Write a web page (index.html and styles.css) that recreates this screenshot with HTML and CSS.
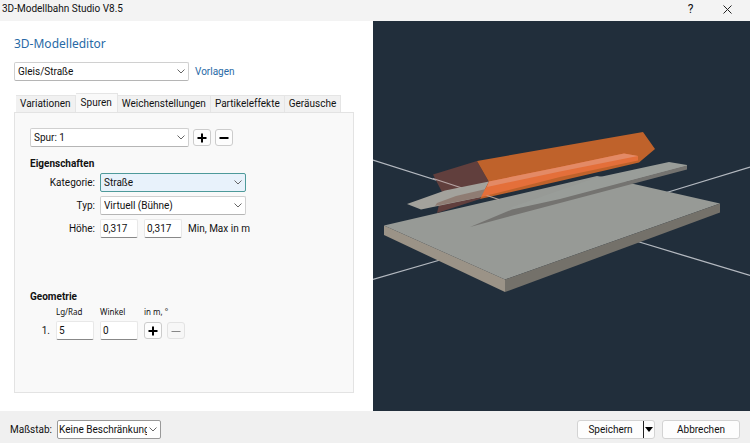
FILE: index.html
```html
<!DOCTYPE html>
<html lang="de">
<head>
    <meta charset="UTF-8">
    <meta name="viewport" content="width=device-width, initial-scale=1.0">
    <title>3D-Modellbahn Studio V8.5</title>
    <link rel="stylesheet" href="styles.css">
</head>
<body>
    <header class="titlebar">
        <span class="window-title">3D-Modellbahn Studio V8.5</span>
        <button class="window-button" type="button" aria-label="Hilfe">?</button>
        <button class="window-button" type="button" aria-label="Schließen">
            <svg width="9" height="9" viewBox="0 0 9 9"><path d="M0.5 0.5L8.5 8.5M8.5 0.5L0.5 8.5" stroke="#222" fill="none"/></svg>
        </button>
    </header>

    <main class="content">
        <section class="editor">
            <h1>3D-Modelleditor</h1>
            <div class="row template-row">
                <select class="wide" aria-label="Modelltyp"><option>Gleis/Straße</option></select>
                <a href="#">Vorlagen</a>
            </div>

            <div class="tabs" role="tablist">
                <button class="tab" type="button" role="tab">Variationen</button>
                <button class="tab active" type="button" role="tab" aria-selected="true">Spuren</button>
                <button class="tab" type="button" role="tab">Weichenstellungen</button>
                <button class="tab" type="button" role="tab">Partikeleffekte</button>
                <button class="tab" type="button" role="tab">Geräusche</button>
            </div>

            <div class="panel" role="tabpanel">
                <div class="row track-row">
                    <select class="track" aria-label="Spur"><option>Spur: 1</option></select>
                    <button class="icon-button" type="button" aria-label="Spur hinzufügen">
                        <svg width="10" height="10" viewBox="0 0 10 10"><path d="M5 0.5V9.5M0.5 5H9.5" stroke="#000" stroke-width="2"/></svg>
                    </button>
                    <button class="icon-button" type="button" aria-label="Spur entfernen">
                        <svg width="10" height="10" viewBox="0 0 10 10"><path d="M0.5 5H9.5" stroke="#000" stroke-width="2"/></svg>
                    </button>
                </div>

                <h2>Eigenschaften</h2>
                <div class="properties">
                    <label for="category">Kategorie:</label>
                    <select id="category" class="medium focused"><option>Straße</option></select>
                    <label for="type">Typ:</label>
                    <select id="type" class="medium"><option>Virtuell (Bühne)</option></select>
                    <label for="height-min">Höhe:</label>
                    <div class="row">
                        <input id="height-min" type="text" value="0,317">
                        <input type="text" value="0,317" aria-label="Höhe Max">
                        <span>Min, Max in m</span>
                    </div>
                </div>

                <h2 class="geometry-title">Geometrie</h2>
                <div class="geometry">
                    <span></span>
                    <label for="length">Lg/Rad</label>
                    <label for="angle">Winkel</label>
                    <small>in m, °</small>
                    <span class="index">1.</span>
                    <input id="length" type="text" value="5">
                    <input id="angle" type="text" value="0">
                    <div class="row">
                        <button class="icon-button" type="button" aria-label="Segment hinzufügen">
                            <svg width="10" height="10" viewBox="0 0 10 10"><path d="M5 0.5V9.5M0.5 5H9.5" stroke="#000" stroke-width="2"/></svg>
                        </button>
                        <button class="icon-button" type="button" aria-label="Segment entfernen" disabled>
                            <svg width="10" height="10" viewBox="0 0 10 10"><path d="M0.5 5.5H9.5" stroke="#888"/></svg>
                        </button>
                    </div>
                </div>
            </div>
        </section>

        <section class="viewport" aria-label="3D-Vorschau">
            <svg viewBox="373 21 377 390" preserveAspectRatio="xMidYMid slice">
                <!-- ground axes -->
                <path d="M373 160L480 194M373 279.500L440 260M665 193L750 167M636 241L750 275.500" stroke="#b4b9c0" stroke-width="1.3"/>
                <!-- base plate -->
                <polygon points="384,225.500 597,176 603,177 720,203.500 505,279.500" fill="#979a96"/>
                <polygon points="384,225.500 505,279.500 505,292 384,235" fill="#9b9387"/>
                <polygon points="505,279.500 720,203.500 720,212.500 505,292" fill="#74716a"/>
                <!-- direction arrow -->
                <polygon points="433,174.500 477,161 489,182 480,199 437,213 442,192" fill="#613f3d"/>
                <path d="M433 178.500L462 188" stroke="#b7a5a5" stroke-width="1.3"/>
                <polygon points="477,161 643,132 655,149 639,162.500 560,181 480,199 489,182" fill="#bf622b"/>
                <path d="M484 194.500L499 199.500" stroke="#b9a39a" stroke-width="1.3"/>
                <!-- rear rail -->
                <polygon points="407,204 445,190.500 462,187 489,181.500 481,197 421,209.500" fill="#a3a29c"/>
                <polygon points="437,203 456,196 486,189 481,197 435,206" fill="#8f7c73"/>
                <polygon points="489,181.500 560,167 624,153.500 638,156 638,160.500 560,177 481,197" fill="#e46f3a"/>
                <polygon points="489,181.500 560,167 624,153.500 638,156 560,171.500 487,187" fill="#e38a66"/>
                <!-- front rail -->
                <polygon points="512,207 595,178 669,162 687,165 687,166 560,199.500 510,210" fill="#999d99"/>
                <polygon points="470,227 512,209.500 560,199 687,165.500 687,169.500 560,203" fill="#747370"/>
            </svg>
        </section>
    </main>

    <footer class="footer">
        <label for="scale">Maßstab:</label>
        <select id="scale" class="scale"><option>Keine Beschränkungen</option></select>
        <div class="split-button">
            <button class="save" type="button">Speichern</button>
            <button class="save-menu" type="button" aria-label="Weitere Speicheroptionen">
                <svg width="8" height="5" viewBox="0 0 8 5"><path d="M0 0H8L4 5Z" fill="#000"/></svg>
            </button>
        </div>
        <button class="cancel" type="button">Abbrechen</button>
    </footer>
</body>
</html>
```
FILE: styles.css
```css
* {
    box-sizing: border-box;
}

body {
    margin: 0;
    min-height: 100vh;
    display: flex;
    flex-direction: column;
    font-family: Roboto, "Open Sans", sans-serif;
    font-size: 10px;
    line-height: 14px;
    color: #111;
    background-color: #fff;
}

button,
input,
select {
    font: inherit;
    color: inherit;
    margin: 0;
}

.titlebar {
    display: flex;
    align-items: center;
    height: 21px;
    padding: 0 4px 3px 2px;
    background-color: #f3f3f3;
}

.window-title {
    flex: 1;
}

.window-button {
    width: 37px;
    height: 18px;
    padding: 0;
    border: none;
    background: none;
    display: flex;
    align-items: center;
    justify-content: center;
    font-size: 12px;
}

.content {
    flex: 1;
    display: flex;
}

.editor {
    flex: 0 0 373px;
    padding: 14px 19px 18px 14px;
    display: flex;
    flex-direction: column;
}

h1 {
    margin: 0 0 9px;
    font-family: "Noto Sans", sans-serif;
    font-size: 12px;
    line-height: 18px;
    font-weight: normal;
    color: #286aa6;
}

h2 {
    margin: 0;
    font-size: 10px;
    line-height: 14px;
    font-weight: bold;
}

a {
    color: #286aa6;
    text-decoration: none;
}

.row {
    display: flex;
    align-items: center;
    gap: 6px;
}

select {
    height: 19px;
    padding: 0 13px 0 3px;
    border: 1px solid #d0d0d0;
    border-bottom-color: #b5b5b5;
    border-radius: 2px;
    appearance: none;
    background: #fff url("data:image/svg+xml,%3Csvg xmlns='http://www.w3.org/2000/svg' width='8' height='5'%3E%3Cpath d='M0.500 0.500L4 4L7.500 0.500' fill='none' stroke='%23666'/%3E%3C/svg%3E") no-repeat right 3px center;
}

select.focused {
    border-color: #4e9a9a;
    background-color: #e8f2fb;
}

.wide {
    width: 175px;
}

.track {
    width: 159px;
}

.medium {
    width: 146px;
}

.tabs {
    display: flex;
    align-items: flex-end;
    margin-top: 12px;
    padding-left: 2px;
}

.tab {
    height: 17px;
    padding: 0 4px;
    border: 1px solid #e5e5e5;
    border-bottom: none;
    border-left: none;
    background-color: #f1f1f1;
}

.tab.active {
    height: 20px;
    padding: 0 5px 1px;
    margin-bottom: -1px;
    background-color: #f9f9f9;
}

.panel {
    flex: 1;
    padding: 15px;
    border: 1px solid #e3e3e3;
    background-color: #f9f9f9;
}

.track-row {
    gap: 4px;
    margin-bottom: 10px;
}

.icon-button {
    width: 18px;
    height: 17px;
    padding: 0;
    border: 1px solid #ccc;
    border-radius: 3px;
    background-color: #fdfdfd;
    display: flex;
    align-items: center;
    justify-content: center;
}

.icon-button:disabled {
    border-color: #e3e3e3;
    background-color: #f7f7f7;
}

.properties {
    display: grid;
    grid-template-columns: 65px 1fr;
    align-items: center;
    gap: 4px 5px;
    margin-top: 2px;
}

.properties label {
    text-align: right;
}

input {
    width: 38px;
    height: 19px;
    padding: 0 2px;
    border: 1px solid #e8e8e8;
    border-bottom: 1px solid #888;
    border-radius: 2px;
    background-color: #fff;
}

.geometry-title {
    margin-top: 52px;
}

.geometry {
    display: grid;
    grid-template-columns: 20px 38px 38px 1fr;
    align-items: center;
    gap: 2px 6px;
    margin-top: 1px;
}

.geometry label,
.geometry small {
    font-family: "Noto Sans", sans-serif;
    font-size: 8px;
}

.index {
    text-align: right;
}

.geometry .row {
    gap: 5px;
}

.viewport {
    flex: 1;
    min-width: 0;
    display: flex;
    background-color: #212e3b;
}

.viewport svg {
    flex: 1;
    min-width: 0;
}

.footer {
    display: flex;
    align-items: center;
    height: 32px;
    padding: 5px 10px 0;
    background-color: #f0f0f0;
    gap: 5px;
}

.scale {
    width: 104px;
    padding-left: 1px;
    border-color: #999;
}

.split-button {
    display: flex;
    margin-left: auto;
    margin-right: 2px;
    border: 1px solid #d3d3d3;
    border-radius: 3px;
    background-color: #fdfdfd;
}

.save,
.save-menu {
    height: 17px;
    padding: 0;
    border: none;
    background: none;
}

.save {
    width: 65px;
}

.save-menu {
    width: 11px;
    border-left: 1px solid #222;
    display: flex;
    align-items: center;
    justify-content: center;
}

.cancel {
    width: 78px;
    height: 19px;
    padding: 0;
    border: 1px solid #d3d3d3;
    border-radius: 3px;
    background-color: #fdfdfd;
}
```
